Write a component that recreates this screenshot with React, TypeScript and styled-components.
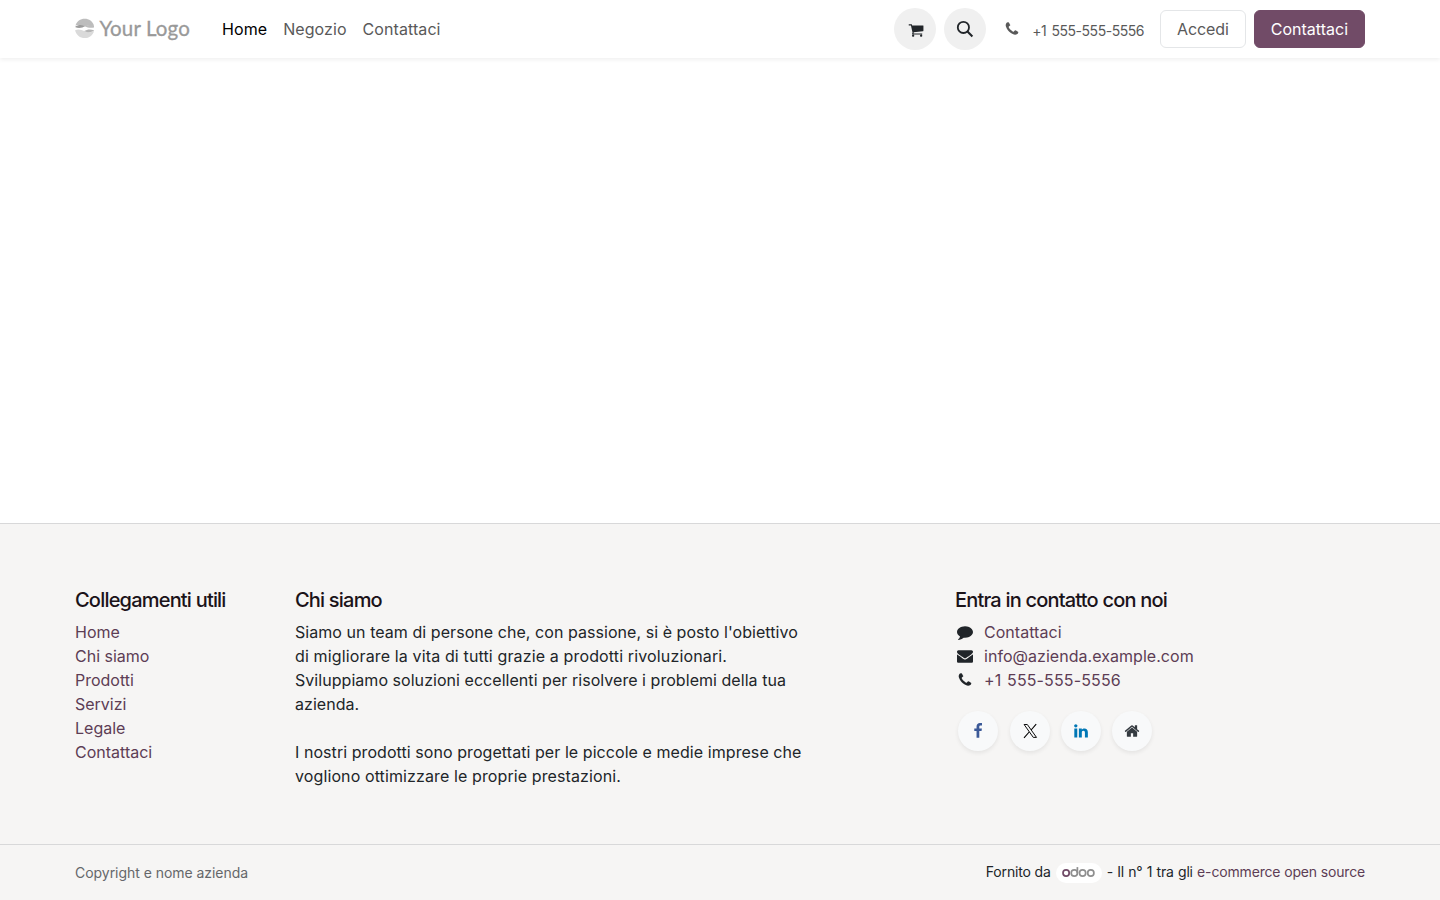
import React from "react";
import styled, { createGlobalStyle } from "styled-components";

const GlobalStyle = createGlobalStyle`
  *, *::before, *::after { box-sizing: border-box; }
  html, body { margin: 0; padding: 0; }
  body {
    font-family: Inter, "Liberation Sans", sans-serif;
    font-size: 16px;
    line-height: 24px;
    color: #212529;
    background: #fff;
    overflow: hidden;
  }
  a { color: inherit; text-decoration: none; }
`;

const Page = styled.div`
  display: flex;
  flex-direction: column;
  height: 900px;
`;

const Container = styled.div`
  width: 1320px;
  margin: 0 auto;
  padding: 0 15px;
`;

const Header = styled.header`
  flex: none;
  height: 58px;
  background: #fff;
  box-shadow: 0 2px 4px rgba(0, 0, 0, 0.06);
  z-index: 1;
`;

const NavBar = styled(Container)`
  display: flex;
  align-items: center;
  height: 58px;
`;

const Brand = styled.a`
  display: flex;
  align-items: center;
  width: 115px;
  height: 40px;
  margin-right: 24px;
  padding-bottom: 2px;
  color: #999;
`;

const BrandName = styled.span`
  margin-left: 5px;
  font: 400 20.5px/24px Lato, sans-serif;
  letter-spacing: 0.14px;
  -webkit-text-stroke: 0.3px #999;
  white-space: nowrap;
`;

const NavLinks = styled.nav`
  display: flex;
`;

const NavLink = styled.a<{ $active?: boolean }>`
  padding: 8px;
  letter-spacing: 0.08px;
  color: ${(p) => (p.$active ? "#000" : "#595959")};
`;

const Actions = styled.div`
  display: flex;
  align-items: center;
  margin-left: auto;
`;

const RoundButton = styled.button`
  display: flex;
  align-items: center;
  justify-content: center;
  width: 42px;
  height: 42px;
  margin-right: 8px;
  padding: 0;
  border: 0;
  border-radius: 50%;
  background: #f0f0f0;
  color: #212529;
`;

const CartButton = styled(RoundButton)`
  padding: 1px 0 0 1px;
`;

const Phone = styled.a`
  display: flex;
  align-items: center;
  margin: 1px 16px 0 10px;
  padding-top: 2px;
  font-size: 14px;
  letter-spacing: -0.46px;
  word-spacing: 1.6px;
  color: #595959;

  svg { margin: -3px 12px 0 0; }
`;

const Button = styled.a<{ $primary?: boolean }>`
  height: 38px;
  padding: 6px 16px;
  border: 1px solid ${(p) => (p.$primary ? "#714b67" : "#e4e6e8")};
  border-radius: 6px;
  background: ${(p) => (p.$primary ? "#714b67" : "#fff")};
  color: ${(p) => (p.$primary ? "#fff" : "#595959")};
  letter-spacing: ${(p) => (p.$primary ? "0" : "-0.1px")};

  & + & { margin-left: 8px; }
`;

const Main = styled.main`
  flex: 1;
`;

const Footer = styled.footer`
  flex: none;
  border-top: 1px solid #d8d8d9;
  background: #f6f5f4;
`;

const FooterColumns = styled(Container)`
  display: grid;
  grid-template-columns: 220px 660px 1fr;
  height: 320px;
  padding-top: 64px;
`;

const Title = styled.h5`
  margin: 0 0 8px;
  font-size: 20px;
  line-height: 24px;
  font-weight: 500;
  letter-spacing: -0.8px;
  color: #1b1319;
`;

const LinkList = styled.ul`
  margin: 0;
  padding: 0;
  list-style: none;
`;

const FooterLink = styled.a`
  color: #5d3d55;
`;

const AboutText = styled.p`
  width: 514px;
  margin: 0 0 24px;
`;

const AboutLine = styled.span<{ $tracking: number }>`
  letter-spacing: ${(p) => p.$tracking}px;
`;

const ContactItem = styled.li<{ $numeric?: boolean }>`
  display: flex;
  align-items: center;
  letter-spacing: ${(p) => (p.$numeric ? "0.14px" : "0.04px")};
  word-spacing: ${(p) => (p.$numeric ? "1px" : "0")};

  svg { margin: 0 11px 0 2px; }
`;

const SocialLinks = styled.div`
  display: flex;
  gap: 11.4px;
  margin: 19px 0 0 3.2px;
`;

const SocialLink = styled.a<{ $color: string }>`
  display: flex;
  align-items: center;
  justify-content: center;
  width: 40px;
  height: 40px;
  border-radius: 50%;
  background: #f8f9fa;
  box-shadow: 0 2px 4px rgba(0, 0, 0, 0.075);
  color: ${(p) => p.$color};
`;

const CopyrightBar = styled.div`
  border-top: 1px solid #d8d8d9;
`;

const CopyrightRow = styled(Container)`
  display: flex;
  align-items: center;
  justify-content: space-between;
  height: 55px;
  font-size: 14px;
  line-height: 21px;
`;

const Copyright = styled.span`
  letter-spacing: -0.04px;
  color: #65676a;
`;

const Powered = styled.div`
  display: flex;
  align-items: center;
  padding-bottom: 2px;
  letter-spacing: -0.16px;
  white-space: pre;
`;

const Claim = styled.span`
  letter-spacing: -0.18px;
  word-spacing: 0.5px;
`;

const OdooBadge = styled.a`
  display: flex;
  align-items: center;
  justify-content: center;
  width: 46px;
  height: 20px;
  margin: 2px 5px 0;
  padding: 0 1px 1px 0;
  border-radius: 10px;
  background: #fff;
`;

const glyphs = {
  cart: "M704 1536q0 52-38 90t-90 38-90-38-38-90 38-90 90-38 90 38 38 90zm896 0q0 52-38 90t-90 38-90-38-38-90 38-90 90-38 90 38 38 90zm128-1088v512q0 24-16.5 42.5t-40.5 21.5l-1044 122q13 60 13 70 0 16-24 64h920q26 0 45 19t19 45-19 45-45 19h-1024q-26 0-45-19t-19-45q0-11 8-31.5t16-36 21.5-40 15.5-29.5l-177-823h-204q-26 0-45-19t-19-45 19-45 45-19h256q16 0 28.5 6.5t19.5 15.5 13 24.5 8 26 5.5 29.5 4.5 26h1201q26 0 45 19t19 45z",
  phone: "M1600 1240q0 27-10 70.5t-21 68.5q-21 50-122 106-94 51-186 51-27 0-53-3.5t-57.5-12.5-47-14.5-55.5-20.5-49-18q-98-35-175-83-127-79-264-216t-216-264q-48-77-83-175-3-9-18-49t-20.5-55.5-14.5-47-12.5-57.5-3.5-53q0-92 51-186 56-101 106-122 25-11 68.5-21t70.5-10q14 0 21 3 18 6 53 76 11 19 30 54t35 63.5 31 53.5q3 4 17.5 25t21.5 35.5 7 28.5q0 20-28.5 50t-62 55-62 53-28.5 46q0 9 5 22.5t8.5 20.5 14 24 11.5 19q76 137 174 235t235 174q2 1 19 11.5t24 14 20.5 8.5 22.5 5q18 0 46-28.5t53-62 55-62 50-28.5q14 0 28.5 7t35.5 21.5 25 17.5q25 15 53.5 31t63.5 35 54 30q70 35 76 53 3 7 3 21z",
  comment: "M1792 896q0 174-120 321.5t-326 233-450 85.5q-70 0-145-8-198 175-460 242-49 14-114 22-17 2-30.5-9t-17.5-29v-1q-3-4-.5-12t2-10 4.5-9.5l6-9 7-8.5 8-9q7-8 31-34.5t34.5-38 31-39.5 32.5-51 27-59 26-76q-157-89-247.5-220t-90.5-281q0-130 71-248.5t191-204.5 286-136.5 348-50.5q244 0 450 85.5t326 233 120 321.5z",
  envelope: "M1792 710v794q0 66-47 113t-113 47h-1472q-66 0-113-47t-47-113v-794q44 49 101 87 362 246 497 345 57 42 92.5 65.5t94.5 48 110 24.5h2q51 0 110-24.5t94.5-48 92.5-65.5q170-123 498-345 57-39 100-87zm0-294q0 79-49 151t-122 123q-376 261-468 325-10 7-42.5 31t-54 38.5-52 32.5-57.5 27-50 9h-2q-23 0-50-9t-57.5-27-52-32.5-54-38.5-42.5-31q-91-64-262-182.5t-205-142.5q-62-42-117-115.5t-55-136.5q0-78 41.5-130t118.5-52h1472q65 0 112.5 47t47.5 113z",
  home: "M1472 992v480q0 26-19 45t-45 19h-384v-384h-256v384h-384q-26 0-45-19t-19-45v-480q0-1 .5-3t.5-3l575-474 575 474q1 2 1 6zm223-69l-62 74q-8 9-21 11h-3q-13 0-21-7l-692-577-692 577q-12 8-24 7-13-2-21-11l-62-74q-8-10-7-23.5t11-21.5l719-599q32-26 76-26t76 26l244 204v-195q0-14 9-23t23-9h192q14 0 23 9t9 23v408l219 182q10 8 11 21.5t-7 23.5z",
  facebook: "M1343 12v264h-157q-86 0-116 36t-30 108v189h293l-39 296h-254v759h-306v-759h-255v-296h255v-218q0-186 104-288.5t277-102.5q147 0 228 12z",
  linkedin: "M477 625v991h-330v-991h330zm21-306q1 73-50.5 122t-135.5 49h-2q-82 0-132-49t-50-122q0-74 51.5-122.5t134.5-48.5 133 48.5 51 122.5zm1166 729v568h-329v-530q0-105-40.5-164.5t-126.5-59.5q-63 0-105.5 34.5t-63.5 85.5q-11 30-11 81v553h-329q2-399 2-647t-1-296l-1-48h329v144h-2q20-32 41-56t56.5-52 87-43.5 114.5-15.5q171 0 275 113.5t104 332.5z",
};

function Icon({ name, size = 16 }: { name: keyof typeof glyphs; size?: number }) {
  return (
    <svg width={size} height={size} viewBox="0 0 1792 1792" fill="currentColor" aria-hidden="true">
      <path d={glyphs[name]} />
    </svg>
  );
}

function SearchIcon() {
  return (
    <svg width="18" height="18" viewBox="0 0 18 18" fill="none" stroke="currentColor" strokeWidth="1.8" aria-hidden="true">
      <circle cx="7.4" cy="7.4" r="5.6" />
      <path d="M11.5 11.5L16.4 16.4" strokeWidth="2.1" />
    </svg>
  );
}

function XIcon() {
  return (
    <svg width="16" height="16" viewBox="0 0 16 16" fill="none" stroke="currentColor" aria-hidden="true">
      <path d="M2.1 1.5H5.3L14.5 14.4H11.3Z" strokeWidth="0.95" />
      <path d="M14.2 1.1L9.1 7M7.2 9L2 14.9" strokeWidth="1.1" />
    </svg>
  );
}

function LogoMark() {
  return (
    <svg width="20" height="21" viewBox="0 0 20 21" aria-hidden="true">
      <path d="M.5 7.4C1.8 3.2 5.5.4 10 .4S18.3 3.2 19.6 7.4C16.4 6.3 13.6 7.2 10.4 8.4C7.2 7 4 6.4.5 7.4Z" fill="#bdbdbd" />
      <path d="M0 9C2.8 6.6 7.2 6.4 10.4 8.2C8 9.6 4 10.8 0 9Z" fill="#9c9c9c" />
      <path d="M10.4 8.2C13.5 6.6 17 6.2 19.4 7.2C19.8 8.2 19.9 9 19.9 9.4C16.5 10.2 13 9.8 10.4 8.2Z" fill="#bdbdbd" />
      <path d="M.1 12.2C3.3 11.1 6.5 11.6 9.5 13.1C12.5 14.4 16.5 14.9 19.7 13C18.5 17.4 14.7 20.4 10 20.4S1.2 17 .1 12.2Z" fill="#dadada" />
      <path d="M9.5 13.1C12.3 11.4 16 10.9 19.9 12.4C17.3 14.9 13 15 9.5 13.1Z" fill="#b5b5b5" />
    </svg>
  );
}

function OdooLogo() {
  return (
    <svg width="33" height="12" viewBox="0 0 33 12" fill="none" stroke="#8f8f8f" strokeWidth="1.7" role="img" aria-label="odoo">
      <circle cx="4.1" cy="7" r="3.1" stroke="#714b67" />
      <circle cx="12.3" cy="7" r="3.1" />
      <path d="M15.4 7V1.1" />
      <circle cx="20.6" cy="7" r="3.1" />
      <circle cx="28.8" cy="7" r="3.1" />
    </svg>
  );
}

const usefulLinks = ["Home", "Chi siamo", "Prodotti", "Servizi", "Legale", "Contattaci"];

const contacts: { icon: keyof typeof glyphs; label: string }[] = [
  { icon: "comment", label: "Contattaci" },
  { icon: "envelope", label: "info@azienda.example.com" },
  { icon: "phone", label: "+1 555-555-5556" },
];

export default function App() {
  return (
    <Page>
      <GlobalStyle />
      <Header>
        <NavBar>
          <Brand href="#">
            <LogoMark />
            <BrandName>Your Logo</BrandName>
          </Brand>
          <NavLinks>
            <NavLink href="#" $active>Home</NavLink>
            <NavLink href="#">Negozio</NavLink>
            <NavLink href="#">Contattaci</NavLink>
          </NavLinks>
          <Actions>
            <CartButton aria-label="Carrello"><Icon name="cart" /></CartButton>
            <RoundButton aria-label="Cerca"><SearchIcon /></RoundButton>
            <Phone href="#">
              <Icon name="phone" />
              +1 555-555-5556
            </Phone>
            <Button href="#">Accedi</Button>
            <Button href="#" $primary>Contattaci</Button>
          </Actions>
        </NavBar>
      </Header>
      <Main />
      <Footer>
        <FooterColumns>
          <section>
            <Title>Collegamenti utili</Title>
            <LinkList>
              {usefulLinks.map((label) => (
                <li key={label}><FooterLink href="#">{label}</FooterLink></li>
              ))}
            </LinkList>
          </section>
          <section>
            <Title>Chi siamo</Title>
            <AboutText>
              <AboutLine $tracking={0.055}>Siamo un team di persone che, con passione, si è posto l'obiettivo </AboutLine>
              <AboutLine $tracking={0.14}>di migliorare la vita di tutti grazie a prodotti rivoluzionari.</AboutLine>
              <br />
              <AboutLine $tracking={0.045}>
                Sviluppiamo soluzioni eccellenti per risolvere i problemi della tua azienda.
              </AboutLine>
            </AboutText>
            <AboutText>
              <AboutLine $tracking={0.065}>I nostri prodotti sono progettati per le piccole e medie imprese che </AboutLine>
              <AboutLine $tracking={0.11}>vogliono ottimizzare le proprie prestazioni.</AboutLine>
            </AboutText>
          </section>
          <section>
            <Title>Entra in contatto con noi</Title>
            <LinkList>
              {contacts.map(({ icon, label }) => (
                <ContactItem key={icon} $numeric={icon === "phone"}>
                  <Icon name={icon} />
                  <FooterLink href="#">{label}</FooterLink>
                </ContactItem>
              ))}
            </LinkList>
            <SocialLinks>
              <SocialLink href="#" $color="#3b5998" aria-label="Facebook"><Icon name="facebook" /></SocialLink>
              <SocialLink href="#" $color="#000" aria-label="X"><XIcon /></SocialLink>
              <SocialLink href="#" $color="#0077b5" aria-label="LinkedIn"><Icon name="linkedin" /></SocialLink>
              <SocialLink href="#" $color="#343a40" aria-label="Home"><Icon name="home" /></SocialLink>
            </SocialLinks>
          </section>
        </FooterColumns>
        <CopyrightBar>
          <CopyrightRow>
            <Copyright>Copyright e nome azienda</Copyright>
            <Powered>
              Fornito da
              <OdooBadge href="#"><OdooLogo /></OdooBadge>
              <Claim>- Il n° 1 tra gli </Claim>
              <FooterLink href="#">e-commerce open source</FooterLink>
            </Powered>
          </CopyrightRow>
        </CopyrightBar>
      </Footer>
    </Page>
  );
}
